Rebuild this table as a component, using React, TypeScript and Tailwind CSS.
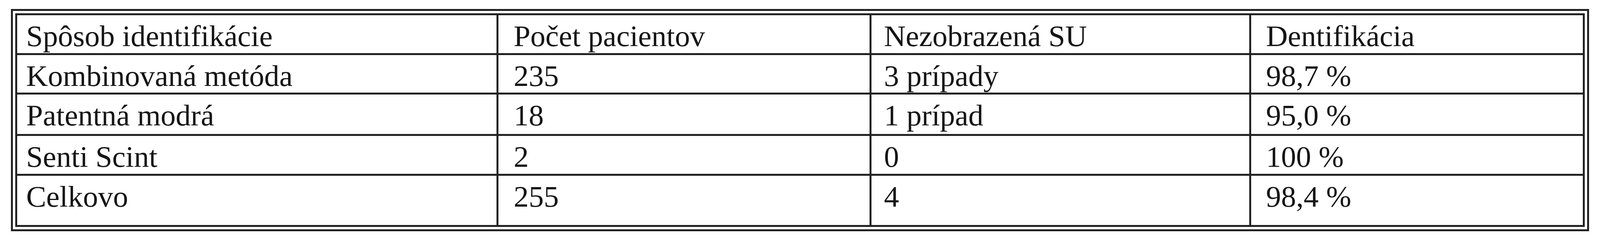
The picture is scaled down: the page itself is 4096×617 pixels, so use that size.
import React from "react";

const rows: string[][] = [
  ["Spôsob identifikácie", "Počet pacientov", "Nezobrazená SU", "Dentifikácia"],
  ["Kombinovaná metóda", "235", "3 prípady", "98,7 %"],
  ["Patentná modrá", "18", "1 prípad", "95,0 %"],
  ["Senti Scint", "2", "0", "100 %"],
  ["Celkovo", "255", "4", "98,4 %"],
];

const padClasses = ["pl-[23px]", "pl-[39px]", "pl-[32px]", "pl-[38px]"];

export default function App() {
  return (
    <div className="w-[4096px] h-[617px] bg-white overflow-hidden">
      <div className="pt-[23px] pl-[28px]">
        <div className="inline-block border-[5px] border-[#222] p-[6px]">
          <div
            className="grid gap-[5px] bg-[#222] border-[5px] border-[#222] grid-cols-[1227px_950px_967px_849px] grid-rows-[97px_96px_101px_97px_126px]"
          >
            {rows.map((r, ri) =>
              r.map((c, ci) => (
                <div
                  key={`${ri}-${ci}`}
                  className={`bg-white text-[#151515] text-[77px] leading-[86px] pt-[10px] whitespace-nowrap ${padClasses[ci]}`}
                  style={{ fontFamily: '"Liberation Serif", "Times New Roman", serif' }}
                >
                  {c}
                </div>
              ))
            )}
          </div>
        </div>
      </div>
    </div>
  );
}
